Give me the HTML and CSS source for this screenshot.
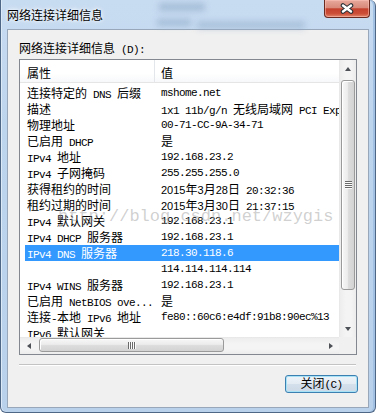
FILE: index.html
```html
<!DOCTYPE html>
<html lang="zh-CN">
<head>
    <meta charset="UTF-8">
    <title>网络连接详细信息</title>
    <link rel="stylesheet" href="styles.css">
</head>
<body>

<div class="window">
    <!-- 标题栏 -->
    <div class="titlebar">
        <span class="glass g1"></span>
        <span class="glass g2"></span>
        <span class="glass g3"></span>
        <span class="title">网络连接详细信息</span>
        <div class="close-btn">
            <svg width="14" height="11" viewBox="0 0 14 11">
                <path d="M3 2.5 L11 8.5 M11 2.5 L3 8.5" stroke="#2e3338" stroke-width="4.6" stroke-linecap="round" fill="none"/>
                <path d="M3 2.5 L11 8.5 M11 2.5 L3 8.5" stroke="#ffffff" stroke-width="2.4" stroke-linecap="round" fill="none"/>
            </svg>
        </div>
    </div>

    <div class="client">
        <div class="caption">网络连接详细信息<span class="en"> (D):</span></div>

        <div class="listbox">
            <div class="viewport">
                <div class="lv-header">
                    <div class="hcol name">属性</div>
                    <div class="hcol value">值</div>
                </div>
                <div class="lv-rows">
                    <div class="lv-row"><span class="c1">连接特定的<span class="en"> DNS </span>后缀</span><span class="c2 en">mshome.net</span></div>
                    <div class="lv-row"><span class="c1">描述</span><span class="c2"><span class="en">1x1 11b/g/n </span>无线局域网<span class="en"> PCI Express Half Mini</span></span></div>
                    <div class="lv-row"><span class="c1">物理地址</span><span class="c2 en">00-71-CC-9A-34-71</span></div>
                    <div class="lv-row"><span class="c1">已启用<span class="en"> DHCP</span></span><span class="c2">是</span></div>
                    <div class="lv-row"><span class="c1"><span class="en">IPv4 </span>地址</span><span class="c2 en">192.168.23.2</span></div>
                    <div class="lv-row"><span class="c1"><span class="en">IPv4 </span>子网掩码</span><span class="c2 en">255.255.255.0</span></div>
                    <div class="lv-row"><span class="c1">获得租约的时间</span><span class="c2"><span class="dg">2015</span>年<span class="dg">3</span>月<span class="dg">28</span>日<span class="en"> 20:32:36</span></span></div>
                    <div class="lv-row"><span class="c1">租约过期的时间</span><span class="c2"><span class="dg">2015</span>年<span class="dg">3</span>月<span class="dg">30</span>日<span class="en"> 21:37:15</span></span></div>
                    <div class="lv-row"><span class="c1"><span class="en">IPv4 </span>默认网关</span><span class="c2 en">192.168.23.1</span></div>
                    <div class="lv-row"><span class="c1"><span class="en">IPv4 DHCP </span>服务器</span><span class="c2 en">192.168.23.1</span></div>
                    <div class="lv-row selected"><span class="c1"><span class="en">IPv4 DNS </span>服务器</span><span class="c2 en">218.30.118.6</span></div>
                    <div class="lv-row"><span class="c1"></span><span class="c2 en">114.114.114.114</span></div>
                    <div class="lv-row"><span class="c1"><span class="en">IPv4 WINS </span>服务器</span><span class="c2 en">192.168.23.1</span></div>
                    <div class="lv-row"><span class="c1">已启用<span class="en"> NetBIOS ove...</span></span><span class="c2">是</span></div>
                    <div class="lv-row"><span class="c1">连接<span class="en">-</span>本地<span class="en"> IPv6 </span>地址</span><span class="c2 en">fe80::60c6:e4df:91b8:90ec%13</span></div>
                    <div class="lv-row"><span class="c1"><span class="en">IPv6 </span>默认网关</span><span class="c2"></span></div>
                </div>
            </div>

            <!-- 竖直滚动条 -->
            <div class="vscroll">
                <div class="arrow"><span class="tri up"></span></div>
                <div class="vthumb"><span class="grip"></span></div>
                <div class="spacer"></div>
                <div class="arrow"><span class="tri down"></span></div>
            </div>

            <!-- 水平滚动条 -->
            <div class="hscroll">
                <div class="arrow"><span class="tri left"></span></div>
                <div class="hthumb"><span class="grip"></span></div>
                <div class="spacer"></div>
                <div class="arrow"><span class="tri right"></span></div>
            </div>

            <div class="corner"></div>
        </div>

        <div class="sep"></div>

        <div class="actions">
            <button class="btn">关闭<span class="en">(C)</span></button>
        </div>
    </div>

    <!-- 水印 -->
    <div class="watermark">http://blog.csdn.net/wzygis</div>
</div>

</body>
</html>
```

FILE: styles.css
```css
* {
    box-sizing: border-box;
}

body {
    margin: 0;
    font-family: "Noto Sans CJK SC", sans-serif;
    font-size: 12px;
    color: #000;
    background: #ffffff;
}

/* 拉丁字符：等宽 6px */
.en {
    font-family: "Liberation Mono", monospace;
    font-size: 11px;
    letter-spacing: -0.6px;
}

.dg {
    font-family: "Liberation Sans", sans-serif;
    font-size: 11px;
}

/* 窗口外框 */
.window {
    position: relative;
    width: 376px;
    height: 413px;
    display: flex;
    flex-direction: column;
    background: linear-gradient(to bottom, #c8dcf1, #bed5ee 30%, #b9d1eb);
    border: 1px solid #4f6786;
    border-top: none;
    border-radius: 0 6px 6px 6px;
    box-shadow: inset -2px 0 0 #a3c1e2, inset 1px 0 0 #dce9f7;
    overflow: hidden;
}

.titlebar {
    position: relative;
    height: 29px;
    flex-shrink: 0;
    display: flex;
    align-items: center;
    padding-left: 6px;
}

.glass {
    position: absolute;
    background: #8aa5c5;
    filter: blur(3px);
    opacity: 0.55;
}

.g1 { left: 158px; top: 3px; width: 46px; height: 8px; }
.g2 { left: 156px; top: 19px; width: 34px; height: 7px; }
.g3 { left: 196px; top: 21px; width: 108px; height: 8px; opacity: 0.45; }

.title {
    position: relative;
    line-height: 16px;
    text-shadow: 0 0 5px #fff, 0 0 3px #fff;
}

.close-btn {
    align-self: flex-start;
    margin-left: auto;
    margin-right: 5px;
    width: 46px;
    height: 18px;
    display: flex;
    align-items: center;
    justify-content: center;
    border: 1px solid #6b2a20;
    border-top: none;
    border-radius: 0 0 4px 4px;
    background: linear-gradient(to bottom, #e7a99c 0%, #d98a7b 45%, #c4412e 52%, #cc4f38 80%, #e2876c 100%);
    box-shadow: inset 0 0 0 1px rgba(255, 200, 190, 0.5);
}

/* 客户区 */
.client {
    flex: 1;
    margin: 0 6px 4px 6px;
    background: #f0f0f0;
    border: 1px solid #98a8ba;
    padding: 10px 10px 0 11px;
    display: flex;
    flex-direction: column;
}

.caption {
    line-height: 16px;
    margin-bottom: 1px;
}

.listbox {
    width: 338px;
    height: 296px;
    border: 1px solid #828790;
    background: #ffffff;
    display: grid;
    grid-template-columns: 1fr 17px;
    grid-template-rows: 1fr 17px;
}

.viewport {
    overflow: hidden;
}

.lv-header {
    display: flex;
    height: 23px;
    border-bottom: 1px solid #e5e5e5;
    background: linear-gradient(to bottom, #ffffff, #ffffff 60%, #f7f8fa);
}

.hcol {
    padding-top: 5px;
    line-height: 16px;
}

.hcol.name {
    width: 135px;
    padding-left: 7px;
    border-right: 1px solid #e3e6ea;
}

.hcol.value {
    padding-left: 6px;
}

.lv-rows {
    padding-top: 2px;
}

.lv-row {
    display: flex;
    height: 16px;
    line-height: 16px;
    margin-left: 5px;
    white-space: nowrap;
}

.lv-row .c1 {
    flex: none;
    width: 136px;
    padding-left: 2px;
    overflow: hidden;
}

.lv-row .c2 {
    flex: none;
}

.lv-row.selected {
    background: #3399ff;
    color: #ffffff;
}

/* 滚动条 */
.vscroll {
    display: flex;
    flex-direction: column;
    background: linear-gradient(to right, #e4e4e4 0, #ededed 1px, #f4f4f4 40%, #f4f4f4 70%, #ececec);
}

.hscroll {
    display: flex;
    background: linear-gradient(to bottom, #e4e4e4 0, #ededed 1px, #f4f4f4 40%, #f4f4f4 70%, #ececec);
}

.corner {
    background: #f0f0f0;
}

.arrow {
    flex: none;
    width: 17px;
    height: 17px;
    display: flex;
    align-items: center;
    justify-content: center;
}

.spacer {
    flex: 1;
}

.tri {
    width: 0;
    height: 0;
}

.tri.up {
    border-left: 3.5px solid transparent;
    border-right: 3.5px solid transparent;
    border-bottom: 4px solid #4d5157;
}

.tri.down {
    border-left: 3.5px solid transparent;
    border-right: 3.5px solid transparent;
    border-top: 4px solid #4d5157;
}

.tri.left {
    border-top: 3.5px solid transparent;
    border-bottom: 3.5px solid transparent;
    border-right: 4px solid #4d5157;
}

.tri.right {
    border-top: 3.5px solid transparent;
    border-bottom: 3.5px solid transparent;
    border-left: 4px solid #4d5157;
}

.vthumb {
    flex: none;
    height: 210px;
    margin: 3px 1px 0 2px;
    border: 1px solid #9a9a9a;
    border-radius: 3px;
    background: linear-gradient(to right, #f7f7f7, #ececec 45%, #dcdcdc 55%, #d3d3d3);
    box-shadow: inset 1px 1px 0 #ffffff;
    display: flex;
    align-items: center;
    justify-content: center;
}

.hthumb {
    flex: none;
    width: 185px;
    margin: 1px 0 2px 2px;
    border: 1px solid #9a9a9a;
    border-radius: 3px;
    background: linear-gradient(to bottom, #f7f7f7, #ececec 45%, #dcdcdc 55%, #d3d3d3);
    box-shadow: inset 1px 1px 0 #ffffff;
    display: flex;
    align-items: center;
    justify-content: center;
}

.vthumb .grip {
    width: 7px;
    height: 8px;
    background: repeating-linear-gradient(to bottom, #6a6a6a 0 1px, #fbfbfb 1px 2px);
}

.hthumb .grip {
    width: 8px;
    height: 7px;
    background: repeating-linear-gradient(to right, #6a6a6a 0 1px, #fbfbfb 1px 2px);
}

/* 分隔线和按钮 */
.sep {
    margin-top: 9px;
    width: 337px;
    height: 2px;
    border-top: 1px solid #c3c3c3;
    border-bottom: 1px solid #ffffff;
}

.actions {
    display: flex;
    justify-content: flex-end;
    margin-top: 9px;
}

.btn {
    width: 73px;
    height: 18px;
    padding: 0;
    font: inherit;
    line-height: 14px;
    color: #000;
    border: 1px solid #3c7fb1;
    border-radius: 3px;
    background: linear-gradient(to bottom, #eef4f9, #e3ebf3 50%, #d4e0ec 50%, #ccd9e6);
    box-shadow: inset 0 0 0 1px #a8e2f7;
}

.watermark {
    position: absolute;
    left: 57px;
    top: 207px;
    font-family: "Liberation Mono", monospace;
    font-size: 17px;
    line-height: 20px;
    color: rgba(150, 150, 150, 0.45);
    white-space: nowrap;
    pointer-events: none;
}
```
